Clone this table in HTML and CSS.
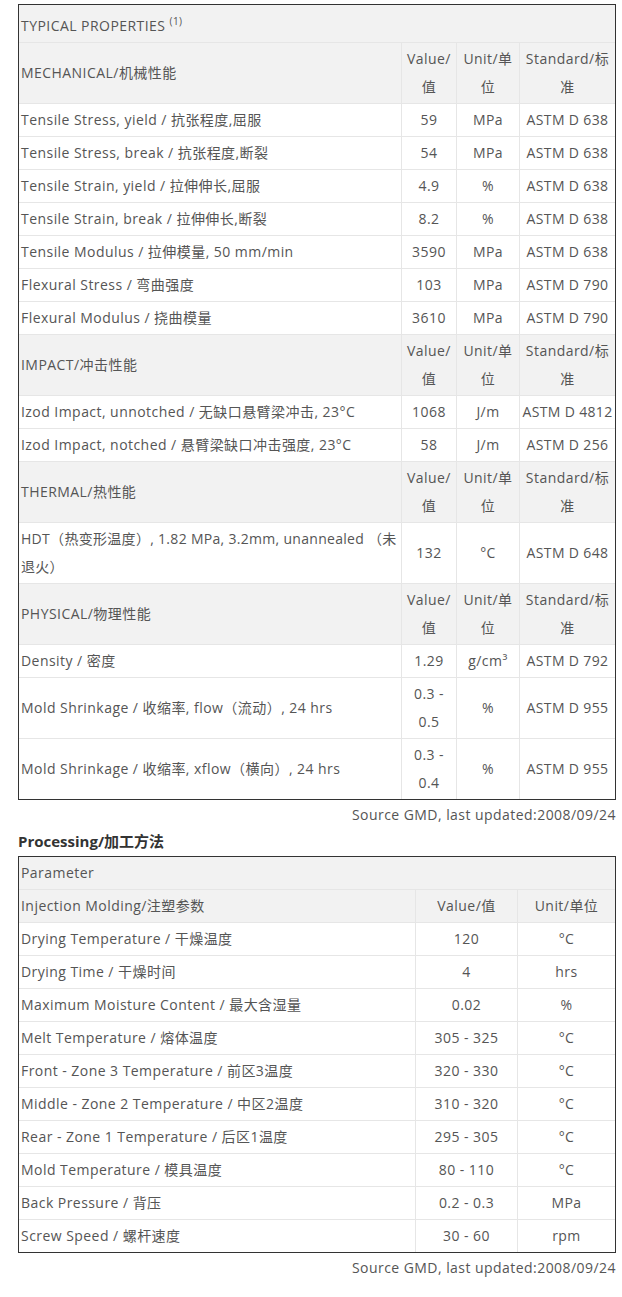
FILE: index.html
```html
<!DOCTYPE html>
<html lang="zh">
<head>
<meta charset="utf-8">
<title>Typical Properties</title>
<link rel="stylesheet" href="styles.css">
</head>
<body>
<div class="page">
  <table class="tbl props">
    <colgroup>
      <col class="c-name"><col class="c-val"><col class="c-unit"><col class="c-std">
    </colgroup>
    <tr class="head"><td colspan="4" class="title">TYPICAL PROPERTIES <sup>(1)</sup></td></tr>
    <tr class="head"><td>MECHANICAL/机械性能</td><td class="ctr">Value/值</td><td class="ctr">Unit/单位</td><td class="ctr">Standard/标准</td></tr>
    <tr><td>Tensile Stress, yield / 抗张程度,屈服</td><td class="ctr">59</td><td class="ctr">MPa</td><td class="ctr std">ASTM D 638</td></tr>
    <tr><td>Tensile Stress, break / 抗张程度,断裂</td><td class="ctr">54</td><td class="ctr">MPa</td><td class="ctr std">ASTM D 638</td></tr>
    <tr><td>Tensile Strain, yield / 拉伸伸长,屈服</td><td class="ctr">4.9</td><td class="ctr">%</td><td class="ctr std">ASTM D 638</td></tr>
    <tr><td>Tensile Strain, break / 拉伸伸长,断裂</td><td class="ctr">8.2</td><td class="ctr">%</td><td class="ctr std">ASTM D 638</td></tr>
    <tr><td>Tensile Modulus / 拉伸模量, 50 mm/min</td><td class="ctr">3590</td><td class="ctr">MPa</td><td class="ctr std">ASTM D 638</td></tr>
    <tr><td>Flexural Stress / 弯曲强度</td><td class="ctr">103</td><td class="ctr">MPa</td><td class="ctr std">ASTM D 790</td></tr>
    <tr><td>Flexural Modulus / 挠曲模量</td><td class="ctr">3610</td><td class="ctr">MPa</td><td class="ctr std">ASTM D 790</td></tr>
    <tr class="head"><td>IMPACT/冲击性能</td><td class="ctr">Value/值</td><td class="ctr">Unit/单位</td><td class="ctr">Standard/标准</td></tr>
    <tr><td>Izod Impact, unnotched / 无缺口悬臂梁冲击, 23°C</td><td class="ctr">1068</td><td class="ctr">J/m</td><td class="ctr std">ASTM D 4812</td></tr>
    <tr><td>Izod Impact, notched / 悬臂梁缺口冲击强度, 23°C</td><td class="ctr">58</td><td class="ctr">J/m</td><td class="ctr std">ASTM D 256</td></tr>
    <tr class="head"><td>THERMAL/热性能</td><td class="ctr">Value/值</td><td class="ctr">Unit/单位</td><td class="ctr">Standard/标准</td></tr>
    <tr><td class="hdt">HDT（热变形温度）, 1.82 MPa, 3.2mm, unannealed （未退火）</td><td class="ctr">132</td><td class="ctr">°C</td><td class="ctr std">ASTM D 648</td></tr>
    <tr class="head"><td>PHYSICAL/物理性能</td><td class="ctr">Value/值</td><td class="ctr">Unit/单位</td><td class="ctr">Standard/标准</td></tr>
    <tr><td>Density / 密度</td><td class="ctr">1.29</td><td class="ctr">g/cm³</td><td class="ctr std">ASTM D 792</td></tr>
    <tr><td>Mold Shrinkage / 收缩率, flow（流动）, 24 hrs</td><td class="ctr">0.3 - 0.5</td><td class="ctr">%</td><td class="ctr std">ASTM D 955</td></tr>
    <tr><td>Mold Shrinkage / 收缩率, xflow（横向）, 24 hrs</td><td class="ctr">0.3 - 0.4</td><td class="ctr">%</td><td class="ctr std">ASTM D 955</td></tr>
  </table>
  <p class="source">Source GMD, last updated:2008/09/24</p>
  <h3 class="section">Processing/加工方法</h3>
  <table class="tbl proc">
    <colgroup>
      <col class="p-name"><col class="p-val"><col class="p-unit">
    </colgroup>
    <tr class="head"><td colspan="3">Parameter</td></tr>
    <tr class="head"><td>Injection Molding/注塑参数</td><td class="ctr">Value/值</td><td class="ctr">Unit/单位</td></tr>
    <tr><td>Drying Temperature / 干燥温度</td><td class="ctr">120</td><td class="ctr">°C</td></tr>
    <tr><td>Drying Time / 干燥时间</td><td class="ctr">4</td><td class="ctr">hrs</td></tr>
    <tr><td>Maximum Moisture Content / 最大含湿量</td><td class="ctr">0.02</td><td class="ctr">%</td></tr>
    <tr><td>Melt Temperature / 熔体温度</td><td class="ctr">305 - 325</td><td class="ctr">°C</td></tr>
    <tr><td>Front - Zone 3 Temperature / 前区3温度</td><td class="ctr">320 - 330</td><td class="ctr">°C</td></tr>
    <tr><td>Middle - Zone 2 Temperature / 中区2温度</td><td class="ctr">310 - 320</td><td class="ctr">°C</td></tr>
    <tr><td>Rear - Zone 1 Temperature / 后区1温度</td><td class="ctr">295 - 305</td><td class="ctr">°C</td></tr>
    <tr><td>Mold Temperature / 模具温度</td><td class="ctr">80 - 110</td><td class="ctr">°C</td></tr>
    <tr><td>Back Pressure / 背压</td><td class="ctr">0.2 - 0.3</td><td class="ctr">MPa</td></tr>
    <tr><td>Screw Speed / 螺杆速度</td><td class="ctr">30 - 60</td><td class="ctr">rpm</td></tr>
  </table>
  <p class="source">Source GMD, last updated:2008/09/24</p>
</div>
</body>
</html>
```
FILE: styles.css
```css
html, body {
  margin: 0;
  padding: 0;
  background: #fff;
}
body {
  font-family: "Open Sans", "Noto Sans CJK SC", sans-serif;
  font-size: 14px;
  color: #555;
  letter-spacing: 0.45px;
}
.page {
  width: 598px;
  padding: 4px 0 0 18px;
}
.tbl {
  width: 598px;
  border-collapse: separate;
  border-spacing: 0;
  table-layout: fixed;
  border: 1px solid #333;
}
.tbl td {
  border-right: 1px solid #e6e6e6;
  border-bottom: 1px solid #e6e6e6;
  padding: 2px 2px;
  line-height: 28px;
  vertical-align: middle;
  word-break: break-word;
}
.tbl td:last-child {
  border-right: none;
}
.tbl tr:last-child td {
  border-bottom: none;
}
.tbl .head td {
  background: #f2f2f2;
}
.tbl td.ctr {
  text-align: center;
}
.tbl td.std {
  white-space: nowrap;
  letter-spacing: 0.35px;
  padding: 2px 0;
}
.tbl td.hdt {
  letter-spacing: 0.3px;
}
.tbl td.title {
  padding-top: 7px;
  padding-bottom: 2px;
}
.tbl sup {
  font-size: 10px;
  line-height: 0;
  vertical-align: 6px;
}
.c-name { width: 383px; }
.c-val { width: 55px; }
.c-unit { width: 63px; }
.c-std { width: 95px; }
.p-name { width: 397px; }
.p-val { width: 102px; }
.p-unit { width: 97px; }
.source {
  margin: 0;
  padding: 5px 0 0;
  text-align: right;
  line-height: 20px;
  font-size: 14px;
  color: #555;
}
.section {
  margin: 0;
  padding: 6px 0 5px;
  font-size: 15px;
  line-height: 20px;
  font-weight: 700;
  letter-spacing: 0;
  color: #333;
}
```
